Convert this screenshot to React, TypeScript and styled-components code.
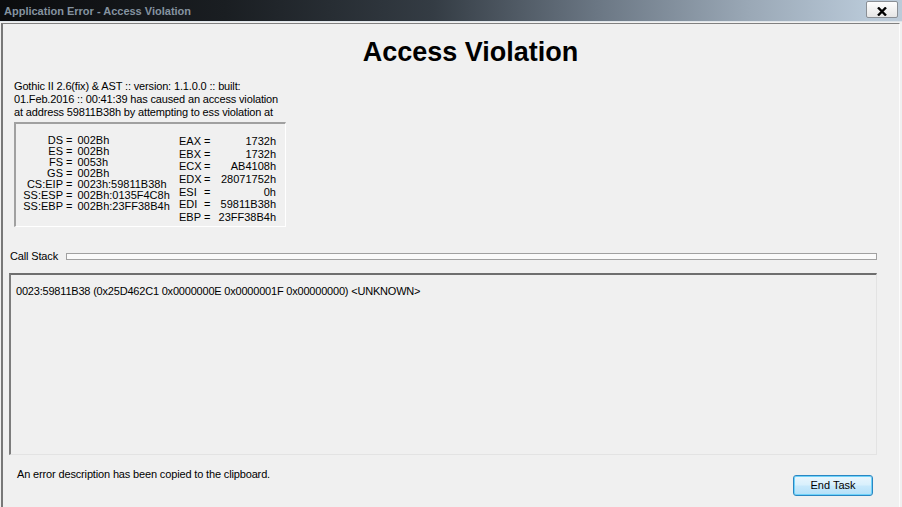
import React, { FC } from "react";
import styled, { createGlobalStyle } from "styled-components";

const GlobalStyle = createGlobalStyle`
  html, body {
    margin: 0;
    padding: 0;
    overflow: hidden;
    background: #f0f0f0;
  }
  body {
    font-family: "Liberation Sans", Arial, sans-serif;
  }
`;

const Window = styled.div`
  display: flex;
  flex-direction: column;
  width: 902px;
  height: 507px;
  background: #f0f0f0;
`;

const TitleBar = styled.div`
  display: flex;
  align-items: flex-start;
  justify-content: space-between;
  flex-shrink: 0;
  height: 21px;
  padding: 0 4px;
  background: linear-gradient(
    to right,
    #0b0c0e 0%,
    #1a1e22 25%,
    #343c44 48%,
    #6a7683 66%,
    #9aa8b6 83%,
    #b8c8d7 96%,
    #bccbd9 100%
  );
  border-bottom: 1px solid #dfe5ea;
`;

const TitleText = styled.span`
  margin-top: 5px;
  font-size: 11px;
  font-weight: bold;
  line-height: 13px;
  color: #8593a0;
  white-space: nowrap;
`;

const CloseButton = styled.div`
  display: flex;
  align-items: center;
  justify-content: center;
  box-sizing: border-box;
  width: 32px;
  height: 17px;
  margin-top: 1px;
  padding-top: 3px;
  border: 1px solid #8a8f95;
  border-radius: 2px;
  background: linear-gradient(#fdfdfd, #e6e6e6);
`;

const Client = styled.div`
  display: flex;
  flex-direction: column;
  flex: 1;
  min-height: 0;
  margin: 1px 2px 0 1px;
  border-top: 1px solid #808080;
  border-left: 2px solid #787878;
  border-right: 1px solid #fcfcfc;
  font-size: 11px;
  line-height: 13px;
  color: #000;
`;

const Heading = styled.div`
  margin-top: 12px;
  padding-left: 39px;
  height: 32px;
  font-size: 27px;
  font-weight: bold;
  line-height: 32px;
  text-align: center;
`;

const Message = styled.div`
  margin: 12px 0 0 11px;
  letter-spacing: -0.15px;
  white-space: nowrap;
`;

const RegisterBox = styled.div`
  display: flex;
  box-sizing: border-box;
  width: 272px;
  height: 105px;
  margin: 3px 0 0 11px;
  padding-top: 11px;
  background: #f0f0f0;
  border-style: solid;
  border-width: 2px 1px 1px 2px;
  border-color: #a0a0a0 #ffffff #ffffff #a0a0a0;
`;

const SegmentGrid = styled.div`
  display: grid;
  grid-template-columns: 47px auto 1fr;
  grid-auto-rows: 11px;
  width: 163px;
  line-height: 11px;
  white-space: nowrap;
`;

const GeneralGrid = styled.div`
  display: grid;
  grid-template-columns: 25px 8px 1fr;
  grid-auto-rows: 12.7px;
  width: 97px;
  line-height: 12.7px;
  white-space: nowrap;
`;

const RegName = styled.span<{ $align: "left" | "right" }>`
  text-align: ${(p) => p.$align};
`;

const Equals = styled.span<{ $wide?: boolean }>`
  margin: ${(p) => (p.$wide ? "0 5px 0 3px" : "0")};
`;

const RegValue = styled.span<{ $align: "left" | "right" }>`
  text-align: ${(p) => p.$align};
`;

const SectionRow = styled.div`
  display: flex;
  align-items: center;
  margin-top: 23px;
  padding: 0 22px 0 7px;
  letter-spacing: -0.15px;
`;

const Groove = styled.div`
  flex: 1;
  box-sizing: border-box;
  height: 7px;
  margin-left: 8px;
  border: 1px solid #a0a0a0;
  background: #fafafa;
`;

const StackList = styled.div`
  box-sizing: border-box;
  height: 182px;
  margin: 10px 22px 0 6px;
  padding: 10px 0 0 5px;
  border-style: solid;
  border-width: 2px 1px 1px 2px;
  border-color: #6e6e6e #e3e3e3 #e3e3e3 #7c7c7c;
  letter-spacing: -0.2px;
  white-space: nowrap;
`;

const Footer = styled.div`
  display: flex;
  align-items: flex-start;
  justify-content: space-between;
  margin-top: 13px;
  padding: 0 26px 0 14px;
`;

const Note = styled.span`
  letter-spacing: -0.15px;
`;

const Button = styled.div`
  box-sizing: border-box;
  width: 80px;
  height: 21px;
  margin-top: 7px;
  border: 1px solid #2a86c2;
  border-radius: 3px;
  box-shadow: inset 0 0 0 1px #6fd3fa;
  background: linear-gradient(#eaf6fd 0%, #d9f0fc 45%, #c6e8fb 55%, #b4e0f8 100%);
  font-size: 11px;
  line-height: 19px;
  text-align: center;
`;

const segmentRegs: [string, string][] = [
  ["DS", "002Bh"],
  ["ES", "002Bh"],
  ["FS", "0053h"],
  ["GS", "002Bh"],
  ["CS:EIP", "0023h:59811B38h"],
  ["SS:ESP", "002Bh:0135F4C8h"],
  ["SS:EBP", "002Bh:23FF38B4h"],
];

const generalRegs: [string, string][] = [
  ["EAX", "1732h"],
  ["EBX", "1732h"],
  ["ECX", "AB4108h"],
  ["EDX", "28071752h"],
  ["ESI", "0h"],
  ["EDI", "59811B38h"],
  ["EBP", "23FF38B4h"],
];

const CloseIcon: FC = () => (
  <svg width="10" height="9" viewBox="0 0 10 9">
    <path d="M1 0.5 L9 8.5 M9 0.5 L1 8.5" stroke="#000" strokeWidth="2.4" />
  </svg>
);

export default function App() {
  return (
    <>
      <GlobalStyle />
      <Window>
        <TitleBar>
          <TitleText>Application Error - Access Violation</TitleText>
          <CloseButton>
            <CloseIcon />
          </CloseButton>
        </TitleBar>

        <Client>
          <Heading>Access Violation</Heading>

          <Message>
            Gothic II 2.6(fix) &amp; AST :: version: 1.1.0.0 :: built:
            <br />
            01.Feb.2016 :: 00:41:39 has caused an access violation
            <br />
            at address 59811B38h by attempting to ess violation at
          </Message>

          <RegisterBox>
            <SegmentGrid>
              {segmentRegs.map(([name, value]) => (
                <React.Fragment key={name}>
                  <RegName $align="right">{name}</RegName>
                  <Equals $wide>=</Equals>
                  <RegValue $align="left">{value}</RegValue>
                </React.Fragment>
              ))}
            </SegmentGrid>
            <GeneralGrid>
              {generalRegs.map(([name, value]) => (
                <React.Fragment key={name}>
                  <RegName $align="left">{name}</RegName>
                  <Equals>=</Equals>
                  <RegValue $align="right">{value}</RegValue>
                </React.Fragment>
              ))}
            </GeneralGrid>
          </RegisterBox>

          <SectionRow>
            <span>Call Stack</span>
            <Groove />
          </SectionRow>

          <StackList>
            0023:59811B38 (0x25D462C1 0x0000000E 0x0000001F 0x00000000)
            &lt;UNKNOWN&gt;
          </StackList>

          <Footer>
            <Note>An error description has been copied to the clipboard.</Note>
            <Button>End Task</Button>
          </Footer>
        </Client>
      </Window>
    </>
  );
}
